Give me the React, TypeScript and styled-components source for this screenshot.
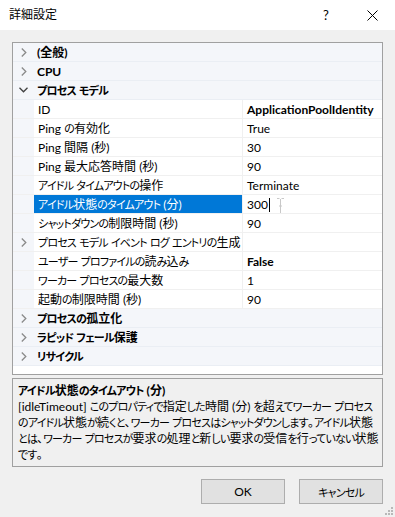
import React from "react";
import styled, { createGlobalStyle } from "styled-components";

const Global = createGlobalStyle`
  html, body { margin: 0; padding: 0; background: #f0f0f0; }
  body {
    font-family: Lato, "Noto Sans CJK JP", sans-serif;
    font-feature-settings: "palt" 1;
    font-size: 12px;
    color: #000;
  }
`;

const Kana = styled.span`
  font-size: 11px;
  letter-spacing: -0.8px;
`;

const KANA_RE = /([\u3040-\u30ff\u30fc]+)/;

const Jp = ({ text }: { text: string }) => (
  <>
    {text.split(KANA_RE).map((part, i) =>
      i % 2 === 1 ? <Kana key={i}>{part}</Kana> : <React.Fragment key={i}>{part}</React.Fragment>
    )}
  </>
);

const Window = styled.div`
  width: 395px;
  height: 517px;
  display: flex;
  flex-direction: column;
  background: #f0f0f0;
  position: relative;
  overflow: hidden;
`;

const TitleBar = styled.div`
  height: 30px;
  background: #fff;
  display: flex;
  align-items: center;
  padding-left: 9px;
  flex-shrink: 0;
`;

const Title = styled.div`
  flex: 1;
  font-size: 12px;
  line-height: 30px;
`;

const TitleButton = styled.div`
  width: 46px;
  height: 30px;
  display: flex;
  align-items: center;
  justify-content: center;
  font-size: 13px;
`;

const Body = styled.div`
  flex: 1;
  display: flex;
  flex-direction: column;
  padding: 12px 12px 0 12px;
`;

const Grid = styled.div`
  height: 333px;
  box-sizing: border-box;
  border: 1px solid #a0a0a0;
  background: #fff;
  display: flex;
  flex-direction: column;
`;

type RowKind = "category" | "property" | "selected";

const Row = styled.div<{ $kind: RowKind }>`
  display: grid;
  grid-template-columns: 21px 208px 1fr;
  height: 19px;
  box-sizing: border-box;
  border-bottom: 1px solid ${(p) => (p.$kind === "category" ? "#eaeef4" : "#f0f0f0")};
  background: ${(p) => (p.$kind === "category" ? "#f4f6fa" : "#fff")};
`;

const Gutter = styled.div`
  background: #f4f6fa;
  display: flex;
  align-items: center;
  justify-content: center;
`;

const CatLabel = styled.div`
  grid-column: 2 / 4;
  font-weight: bold;
  line-height: 17px;
  padding: 1px 0 0 3px;
  white-space: nowrap;
`;

const NameCell = styled.div<{ $selected?: boolean }>`
  line-height: 17px;
  padding: 1px 0 0 4px;
  white-space: nowrap;
  overflow: hidden;
  background: ${(p) => (p.$selected ? "#0078d7" : "#fff")};
  color: ${(p) => (p.$selected ? "#fff" : "#000")};
`;

const ValueCell = styled.div<{ $bold?: boolean }>`
  line-height: 17px;
  padding: 1px 0 0 4px;
  border-left: 1px solid #f0f0f0;
  font-weight: ${(p) => (p.$bold ? "bold" : "normal")};
  white-space: nowrap;
  overflow: hidden;
  position: relative;
  display: flex;
  align-items: center;
`;

const Caret = styled.span`
  display: inline-block;
  width: 1px;
  height: 14px;
  background: #000;
  margin-left: 1px;
`;

const IBeam = styled.svg`
  position: absolute;
  left: 34px;
  top: 3px;
`;

const Desc = styled.div`
  margin-top: 3px;
  height: 89px;
  box-sizing: border-box;
  border: 1px solid #a0a0a0;
  padding: 3px 5px 2px 5px;
`;

const DescTitle = styled.div`
  font-weight: bold;
  line-height: 17px;
`;

const DescText = styled.div`
  line-height: 16px;
  white-space: nowrap;
`;

const Buttons = styled.div`
  display: flex;
  justify-content: flex-end;
  gap: 14px;
  margin-top: 12px;
`;

const Button = styled.button`
  width: 84px;
  height: 25px;
  box-sizing: border-box;
  background: #e1e1e1;
  border: 1px solid #adadad;
  font-family: inherit;
  font-feature-settings: "palt" 1;
  font-size: 12px;
  color: #000;
  padding: 0;
  border-radius: 0;
`;

const Grip = styled.svg`
  position: absolute;
  right: 2px;
  bottom: 2px;
`;

const Chevron = ({ open }: { open?: boolean }) =>
  open ? (
    <svg width="9" height="6" viewBox="0 0 9 6">
      <path d="M0.5 0.8 L4.5 4.8 L8.5 0.8" fill="none" stroke="#404040" strokeWidth="1.3" />
    </svg>
  ) : (
    <svg width="6" height="9" viewBox="0 0 6 9">
      <path d="M0.8 0.5 L4.8 4.5 L0.8 8.5" fill="none" stroke="#8a8a8a" strokeWidth="1.3" />
    </svg>
  );

type Item =
  | { t: "cat"; label: string; open?: boolean }
  | { t: "prop"; name: string; value: string; bold?: boolean; expander?: boolean; selected?: boolean };

const items: Item[] = [
  { t: "cat", label: "(全般)" },
  { t: "cat", label: "CPU" },
  { t: "cat", label: "プロセス モデル", open: true },
  { t: "prop", name: "ID", value: "ApplicationPoolIdentity", bold: true },
  { t: "prop", name: "Ping の有効化", value: "True" },
  { t: "prop", name: "Ping 間隔 (秒)", value: "30" },
  { t: "prop", name: "Ping 最大応答時間 (秒)", value: "90" },
  { t: "prop", name: "アイドル タイムアウトの操作", value: "Terminate" },
  { t: "prop", name: "アイドル状態のタイムアウト (分)", value: "300", selected: true },
  { t: "prop", name: "シャットダウンの制限時間 (秒)", value: "90" },
  { t: "prop", name: "プロセス モデル イベント ログ エントリの生成", value: "", expander: true },
  { t: "prop", name: "ユーザー プロファイルの読み込み", value: "False", bold: true },
  { t: "prop", name: "ワーカー プロセスの最大数", value: "1" },
  { t: "prop", name: "起動の制限時間 (秒)", value: "90" },
  { t: "cat", label: "プロセスの孤立化" },
  { t: "cat", label: "ラピッド フェール保護" },
  { t: "cat", label: "リサイクル" },
];

const descLines = [
  "[idleTimeout] このプロパティで指定した時間 (分) を超えてワーカー プロセス",
  "のアイドル状態が続くと、ワーカー プロセスはシャットダウンします。アイドル状態",
  "とは、ワーカー プロセスが要求の処理と新しい要求の受信を行っていない状態",
  "です。",
];

export default function App() {
  return (
    <Window>
      <Global />
      <TitleBar>
        <Title>詳細設定</Title>
        <TitleButton>?</TitleButton>
        <TitleButton>
          <svg width="11" height="11" viewBox="0 0 11 11">
            <path d="M0.5 0.5 L10.5 10.5 M10.5 0.5 L0.5 10.5" stroke="#000" strokeWidth="1" />
          </svg>
        </TitleButton>
      </TitleBar>
      <Body>
        <Grid>
          {items.map((it, i) =>
            it.t === "cat" ? (
              <Row key={i} $kind="category">
                <Gutter>
                  <Chevron open={it.open} />
                </Gutter>
                <CatLabel>
                  <Jp text={it.label} />
                </CatLabel>
              </Row>
            ) : (
              <Row key={i} $kind={it.selected ? "selected" : "property"}>
                <Gutter>{it.expander && <Chevron />}</Gutter>
                <NameCell $selected={it.selected}>
                  <Jp text={it.name} />
                </NameCell>
                <ValueCell $bold={it.bold}>
                  {it.value}
                  {it.selected && (
                    <>
                      <Caret />
                      <IBeam width="7" height="16" viewBox="0 0 7 16">
                        <path d="M0 0.5 H2.5 M4.5 0.5 H7 M3.5 1 V15 M0 15.5 H2.5 M4.5 15.5 H7 M2 8 H5" stroke="#c8c8c8" strokeWidth="1" fill="none" />
                      </IBeam>
                    </>
                  )}
                </ValueCell>
              </Row>
            )
          )}
        </Grid>
        <Desc>
          <DescTitle>
            <Jp text="アイドル状態のタイムアウト (分)" />
          </DescTitle>
          {descLines.map((l, i) => (
            <DescText key={i}>
              <Jp text={l} />
            </DescText>
          ))}
        </Desc>
        <Buttons>
          <Button>OK</Button>
          <Button>
            <Jp text="キャンセル" />
          </Button>
        </Buttons>
      </Body>
      <Grip width="10" height="10" viewBox="0 0 10 10">
        {[
          [8, 0], [8, 3], [5, 3], [8, 6], [5, 6], [2, 6],
        ].map(([x, y], k) => (
          <rect key={k} x={x} y={y + 2} width="2" height="2" fill="#b8b8b8" />
        ))}
      </Grip>
    </Window>
  );
}
